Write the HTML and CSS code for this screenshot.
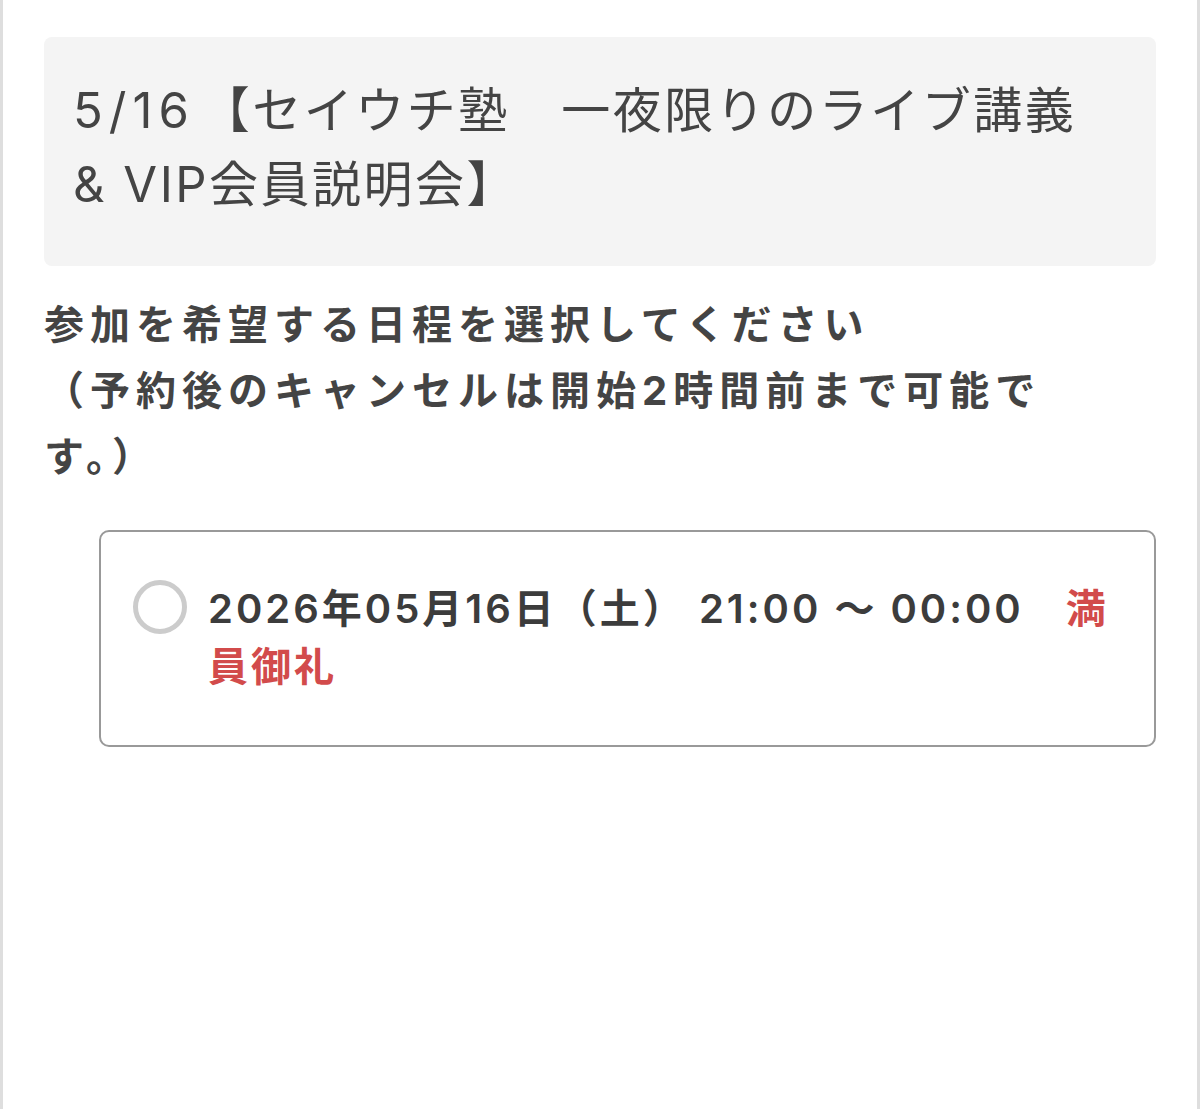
FILE: index.html
```html
<!DOCTYPE html>
<html lang="ja">
<head>
    <meta charset="UTF-8">
    <meta name="viewport" content="width=device-width, initial-scale=1.0">
    <title>日程選択</title>
    <link rel="stylesheet" href="styles.css">
</head>
<body>
    <div class="page">
        <div class="event-title">
            <h1><span class="event-date">5/16</span>【セイウチ塾　一夜限りのライブ講義 &amp; VIP会員説明会】</h1>
        </div>

        <p class="lead">参加を希望する日程を選択してください<br>（予約後のキャンセルは開始2時間前まで可能です。）</p>

        <label class="slot">
            <span class="radio"></span>
            <span class="slot-text">2026年05月16日（土） 21:00 〜 00:00<span class="full">満員御礼</span></span>
        </label>
    </div>
</body>
</html>
```

FILE: styles.css
```css
body {
    margin: 0;
    background-color: #fff;
    font-family: Inter, "Noto Sans CJK JP", sans-serif;
    color: #444;
}
.page {
    min-height: 1109px;
    box-sizing: border-box;
    border-left: 3px solid #dedede;
    border-right: 3px solid #dedede;
    padding: 37px 41px 0 41px;
}
.event-title {
    background-color: #f4f4f4;
    border-radius: 8px;
    padding: 37px 60px 44px 29px;
}
h1 {
    margin: 0;
    font-size: 49px;
    font-weight: normal;
    line-height: 74px;
    letter-spacing: 2.5px;
    color: #444;
}
.event-date {
    letter-spacing: 6px;
    margin-right: 6px;
}
.lead {
    margin: 26px 0 0 0;
    padding-right: 60px;
    font-size: 40px;
    font-weight: bold;
    line-height: 66px;
    letter-spacing: 6px;
    color: #444;
}
.slot {
    display: flex;
    align-items: flex-start;
    margin: 40px 0 0 55px;
    padding: 48px 40px 49px 32px;
    border: 2px solid #999;
    border-radius: 10px;
    cursor: pointer;
}
.radio {
    flex: none;
    width: 44px;
    height: 44px;
    border: 5px solid #ccc;
    border-radius: 50%;
    margin-right: 21px;
}
.slot-text {
    font-size: 40px;
    font-weight: 600;
    line-height: 58px;
    letter-spacing: 3px;
    color: #3c3c3c;
}
.full {
    margin-left: 42px;
    font-weight: bold;
    color: #d24b4b;
}
```
